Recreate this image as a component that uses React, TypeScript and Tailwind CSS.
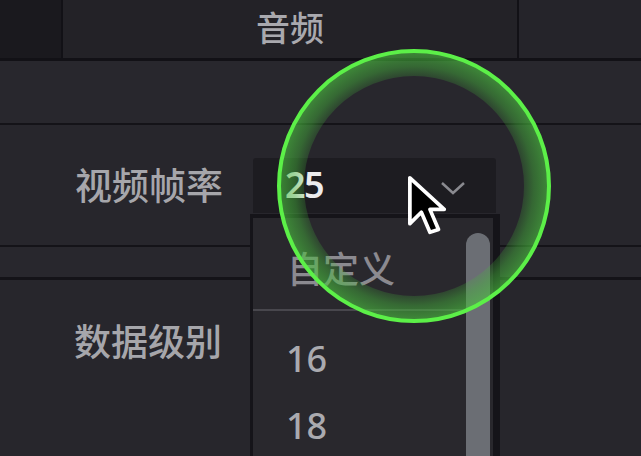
import React from "react";

const font = { fontFamily: '"Noto Sans", "Noto Sans CJK SC", sans-serif' };

function Cursor() {
  return (
    <svg className="absolute left-[407px] top-[175px]" width="43" height="63" viewBox="0 0 15 22">
      <path
        d="M1 1 L1 17 L5 13 L8 20 L11 19 L8 12 L13 12 Z"
        fill="#000"
        stroke="#fff"
        strokeWidth="1.3"
        strokeLinejoin="round"
      />
    </svg>
  );
}

function ClickRing() {
  // highlight ring drawn by the screen recorder
  return (
    <svg className="absolute left-[270px] top-[42px] pointer-events-none" width="290" height="290" viewBox="0 0 290 290">
      <defs>
        <radialGradient id="band" cx="144" cy="144" r="136" gradientUnits="userSpaceOnUse">
          <stop offset="0.78" stopColor="#46b83c" stopOpacity="0.12" />
          <stop offset="0.88" stopColor="#46b83c" stopOpacity="0.45" />
          <stop offset="1" stopColor="#4cc440" stopOpacity="0.65" />
        </radialGradient>
      </defs>
      <circle cx="144" cy="144" r="122" fill="none" stroke="url(#band)" strokeWidth="24" />
      <circle cx="144" cy="144" r="135" fill="none" stroke="#5cf048" strokeWidth="4" />
    </svg>
  );
}

export default function App() {
  return (
    <div className="relative w-[641px] h-[456px] overflow-hidden bg-[#27262c] flex flex-col" style={font}>
      {/* tab bar */}
      <div className="h-[61px] flex border-b-[3px] border-[#121116] shrink-0">
        <div className="w-[63px] bg-[#1a191e] border-r-2 border-[#121116]" />
        <div className="flex-1 bg-[#232227] flex items-center justify-center text-[34px] font-medium leading-none text-[#a9a9ae] pb-[3px]">
          音频
        </div>
        <div className="w-[124px] bg-[#25242a] border-l-2 border-[#121116]" />
      </div>

      <div className="h-[64px] bg-[#28272d] border-b-2 border-[#141318] shrink-0" />

      {/* frame rate row */}
      <div className="h-[120px] flex items-center shrink-0">
        <div className="w-[253px] pr-[30px] text-right text-[37px] font-medium leading-none text-[#a6a6ab]">视频帧率</div>
        <div className="w-[243px] h-[55px] rounded-t-[3px] bg-[#1d1c21] flex items-center pl-[32px] pr-[30px]">
          <span className="text-[36px] font-semibold leading-none text-[#ececee] tracking-[-1.5px]">25</span>
          <svg className="ml-auto mt-[6px]" width="26" height="15" viewBox="0 0 26 15">
            <path d="M2 2 L13 12 L24 2" fill="none" stroke="#8a8a90" strokeWidth="2.5" />
          </svg>
        </div>
      </div>

      <div className="h-[35px] bg-[#28272d] border-t-2 border-b-[3px] border-[#141318] shrink-0" />

      {/* data level row */}
      <div className="flex-1 pt-[43px]">
        <div className="w-[253px] pr-[31px] text-right text-[37px] font-medium leading-none text-[#a6a6ab]">数据级别</div>
      </div>

      {/* open dropdown list */}
      <div className="absolute left-[250px] top-[214px] w-[250px] bottom-0 bg-[#29282d] border-l-[3px] border-t-[4px] border-r-[7px] border-[#151419]">
        <div className="absolute left-[213px] top-[15px] w-[24px] h-[300px] rounded-t-full bg-[#6b6e74]" />
        <div className="pt-[18px] flex flex-col">
          <div className="h-[67px] flex items-center pl-[34px] text-[36px] font-medium leading-none text-[#8b8a90]">自定义</div>
          <div className="mt-[6px] mr-[25px] h-[2px] bg-[#48474d]" />
          <div className="mt-[14px] h-[67px] flex items-center pl-[33px] text-[36px] font-medium leading-none text-[#aaaaaf]">16</div>
          <div className="h-[67px] flex items-center pl-[33px] text-[36px] font-medium leading-none text-[#aaaaaf]">18</div>
        </div>
      </div>

      <ClickRing />
      <Cursor />
    </div>
  );
}
